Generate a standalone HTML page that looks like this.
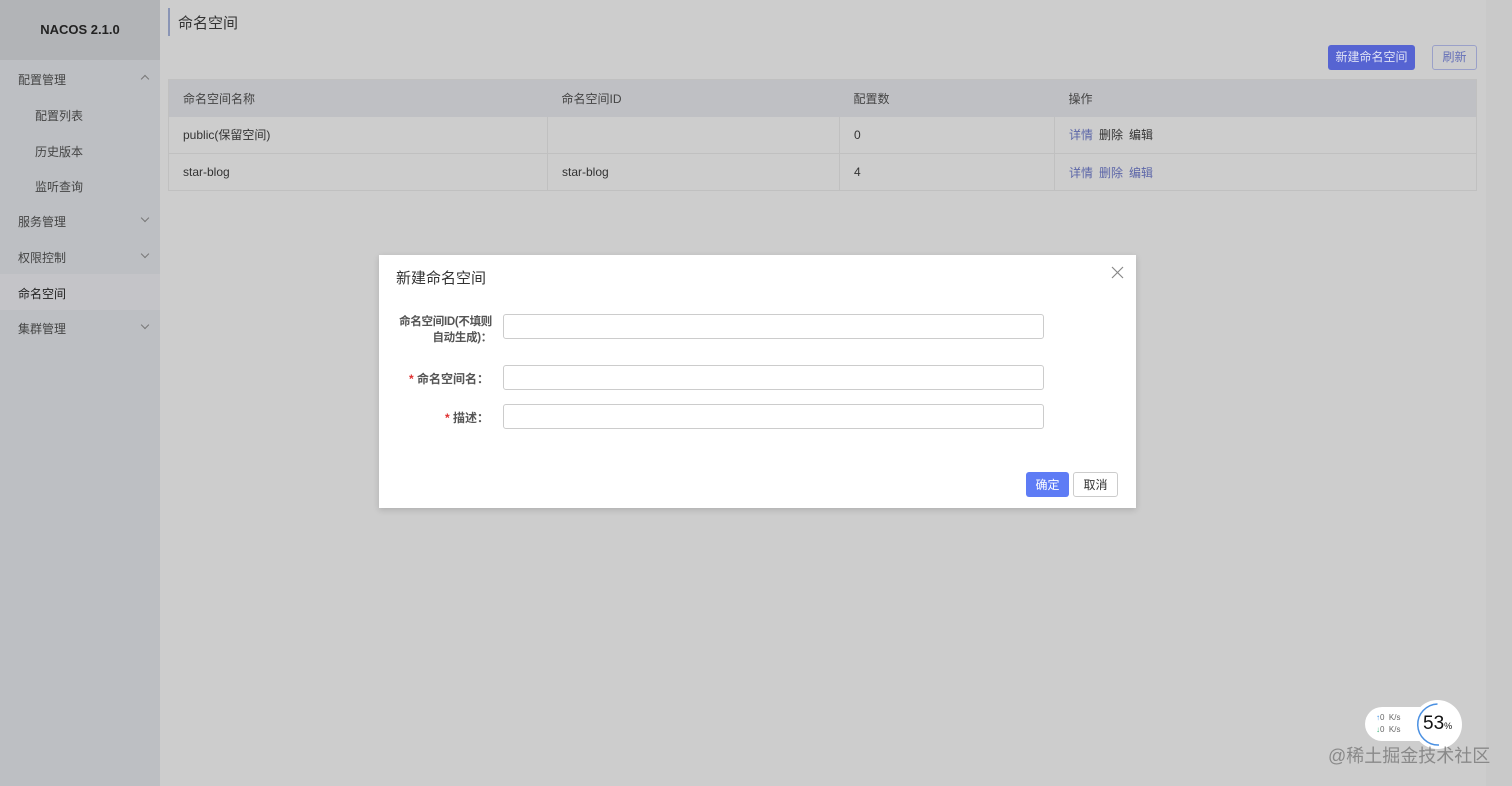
<!DOCTYPE html>
<html><head><meta charset="utf-8"><style>
*{margin:0;padding:0;box-sizing:border-box}
body{width:1512px;height:786px;overflow:hidden;background:#cdcdcd;font-family:"Liberation Sans","Noto Sans CJK SC",sans-serif;font-size:12px;color:#333;position:relative}
.a{position:absolute}
.side{left:0;top:0;width:160px;height:786px;background:#bdbfc3}
.logo{left:0;top:0;width:160px;height:60px;background:#b2b4b7;text-align:center;line-height:60px;font-weight:bold;font-size:13px;color:#222}
.mi{left:18px;font-size:12px;color:#444}
.si{left:35px;font-size:12px;color:#444}
.chev{left:142px;width:6px;height:6px;border-right:1px solid #777;border-bottom:1px solid #777}
td,th{font-weight:normal;text-align:left;padding-left:14px}
</style></head><body>
<div class="a side"></div>
<div class="a logo">NACOS 2.1.0</div>
<div class="a mi" style="top:71px">配置管理</div><div class="a chev" style="top:76px;transform:rotate(-135deg)"></div>
<div class="a si" style="top:107px">配置列表</div>
<div class="a si" style="top:143px">历史版本</div>
<div class="a si" style="top:178px">监听查询</div>
<div class="a mi" style="top:213px">服务管理</div><div class="a chev" style="top:215px;transform:rotate(45deg)"></div>
<div class="a mi" style="top:249px">权限控制</div><div class="a chev" style="top:251px;transform:rotate(45deg)"></div>
<div class="a" style="left:0;top:274px;width:160px;height:36px;background:#c4c4c8"></div>
<div class="a mi" style="top:285px;color:#222">命名空间</div>
<div class="a mi" style="top:320px">集群管理</div><div class="a chev" style="top:322px;transform:rotate(45deg)"></div>

<div class="a" style="left:168px;top:8px;width:2px;height:28px;background:#8a95b5"></div>
<div class="a" style="left:178px;top:12px;font-size:15px;color:#333">命名空间</div>
<div class="a" style="left:1328px;top:45px;width:87px;height:25px;background:#5664d2;border-radius:3px;color:#dfe2f5;text-align:center;line-height:25px">新建命名空间</div>
<div class="a" style="left:1432px;top:45px;width:45px;height:25px;border:1px solid #9aa0c8;border-radius:3px;color:#6570b8;text-align:center;line-height:23px">刷新</div>
<div class="a" style="left:1486px;top:0;width:26px;height:786px;background:#c9c9c9"></div>

<table class="a" style="left:168px;top:79px;width:1309px;border-collapse:collapse;border:1px solid #c0c0c0">
<tr style="height:37px;background:#bfc0c4;color:#444"><th style="width:379px">命名空间名称</th><th style="width:292px">命名空间ID</th><th style="width:215px">配置数</th><th>操作</th></tr>
<tr style="height:37px;border-bottom:1px solid #c0c0c0"><td style="border-right:1px solid #c0c0c0">public(保留空间)</td><td style="border-right:1px solid #c0c0c0"></td><td style="border-right:1px solid #c0c0c0">0</td><td><span style="color:#5c66a8">详情</span><span style="margin-left:6px">删除</span><span style="margin-left:6px">编辑</span></td></tr>
<tr style="height:37px"><td style="border-right:1px solid #c0c0c0">star-blog</td><td style="border-right:1px solid #c0c0c0">star-blog</td><td style="border-right:1px solid #c0c0c0">4</td><td style="color:#5c66a8">详情<span style="margin-left:6px">删除</span><span style="margin-left:6px">编辑</span></td></tr>
</table>

<div class="a" style="left:379px;top:255px;width:757px;height:253px;background:#fff;box-shadow:0 2px 6px rgba(0,0,0,.15)">
<div class="a" style="left:17px;top:12px;font-size:15px;color:#333">新建命名空间</div>
<svg class="a" style="left:732px;top:11px" width="13" height="13"><path d="M1 1L12 12M12 1L1 12" stroke="#888" stroke-width="1.2"/></svg>
<div class="a" style="left:0;top:59px;width:113px;text-align:right;font-weight:bold;color:#555;line-height:16px;font-size:11.5px;letter-spacing:-0.3px">命名空间ID(不填则<br>自动生成)：</div>
<div class="a" style="left:0;top:115px;width:110px;text-align:right;font-weight:bold;color:#555"><span style="color:#e03030">*</span> 命名空间名：</div>
<div class="a" style="left:0;top:154px;width:110px;text-align:right;font-weight:bold;color:#555"><span style="color:#e03030">*</span> 描述：</div>
<div class="a" style="left:124px;top:59px;width:541px;height:25px;border:1px solid #ccc;border-radius:3px"></div>
<div class="a" style="left:124px;top:110px;width:541px;height:25px;border:1px solid #ccc;border-radius:3px"></div>
<div class="a" style="left:124px;top:149px;width:541px;height:25px;border:1px solid #ccc;border-radius:3px"></div>
<div class="a" style="left:647px;top:217px;width:43px;height:25px;background:#5e7cf5;border-radius:3px;color:#fff;text-align:center;line-height:26px">确定</div>
<div class="a" style="left:694px;top:217px;width:45px;height:25px;border:1px solid #ccc;border-radius:3px;text-align:center;line-height:24px">取消</div>
</div>

<div class="a" style="left:1365px;top:707px;width:90px;height:34px;background:#fff;border-radius:17px"></div>
<div class="a" style="left:1376px;top:712px;font-size:8px;color:#666;line-height:12px"><span style="color:#3a8ee6">↑</span>0 &nbsp;K/s<br><span style="color:#3bb37a">↓</span>0 &nbsp;K/s</div>
<div class="a" style="left:1413px;top:700px;width:49px;height:49px;border-radius:50%;background:#fff"></div>
<svg class="a" style="left:1413px;top:700px" width="49" height="49"><path d="M24.5 4 A20.5 20.5 0 0 0 26 45" fill="none" stroke="#4a90e2" stroke-width="1.5"/></svg>
<div class="a" style="left:1423px;top:713px;font-size:19px;color:#111">53<span style="font-size:9px">%</span></div>
<div class="a" style="left:1328px;top:742px;font-size:18px;color:rgba(120,120,120,.8)">@稀土掘金技术社区</div>
</body></html>
